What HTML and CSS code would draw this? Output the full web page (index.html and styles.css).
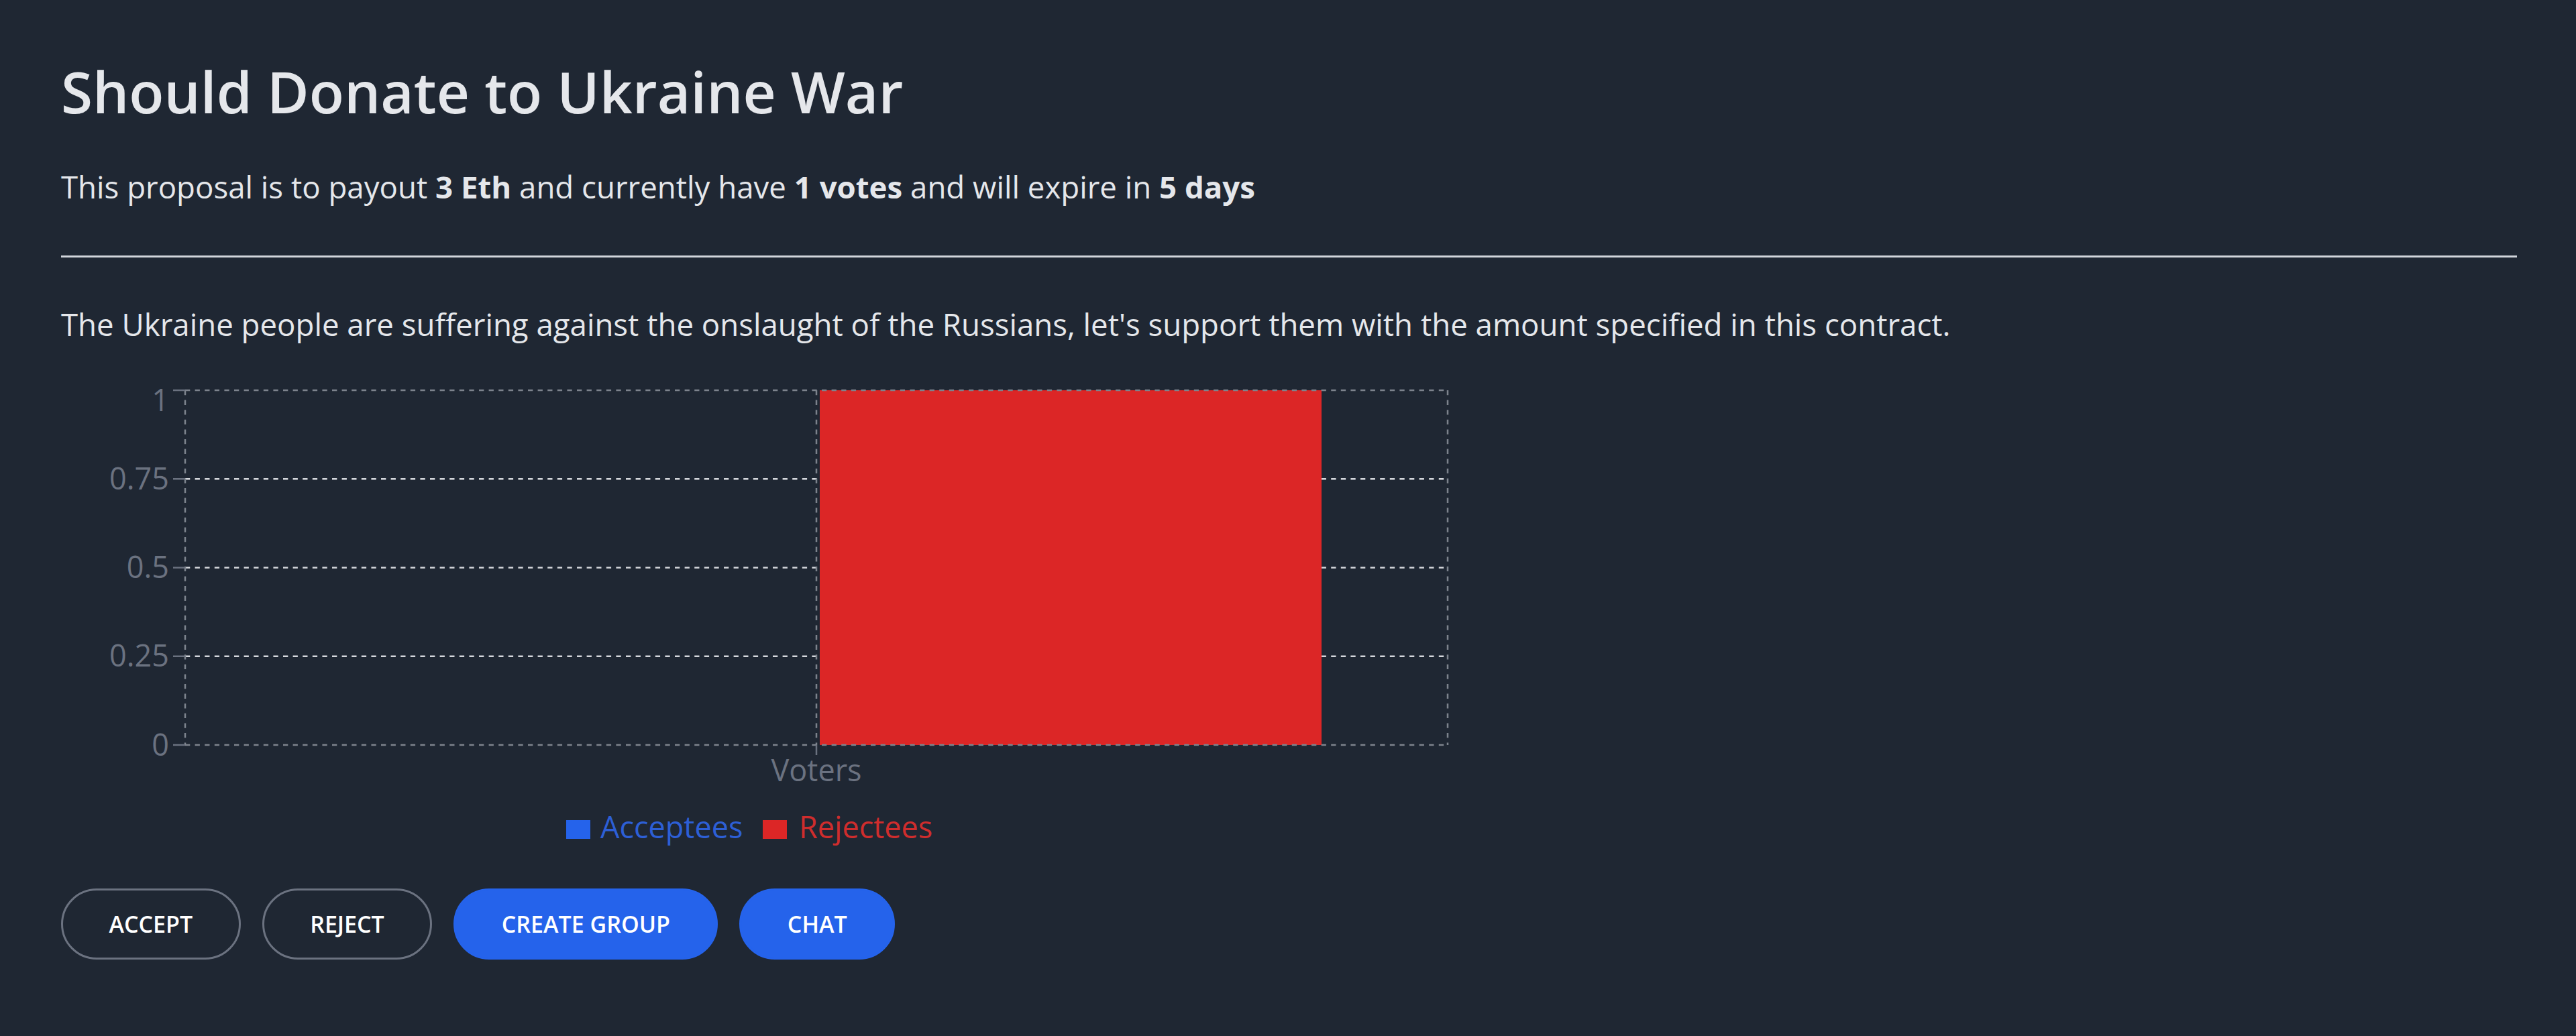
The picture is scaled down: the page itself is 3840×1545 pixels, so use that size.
FILE: index.html
```html
<!DOCTYPE html>
<html lang="en">
<head>
    <meta charset="UTF-8" />
    <meta name="viewport" content="width=device-width, initial-scale=1.0" />
    <title>Proposal</title>
    <link rel="stylesheet" href="styles.css">
</head>
<body>
    <main class="proposal">
        <h1 class="proposal-title">Should Donate to Ukraine War</h1>
        <p class="proposal-meta">This proposal is to payout <strong>3 Eth</strong> and currently have <strong>1 votes</strong> and will expire in <strong>5 days</strong></p>

        <hr class="divider" />

        <p class="proposal-desc">The Ukraine people are suffering against the onslaught of the Russians, let's support them with the amount specified in this contract.</p>

        <!-- Votes chart -->
        <svg class="chart" width="2120" height="740" viewBox="0 0 2120 740">
            <g class="grid">
                <line class="grid-inner" x1="185" y1="174.25" x2="2067" y2="174.25" />
                <line class="grid-inner" x1="185" y1="306.5" x2="2067" y2="306.5" />
                <line class="grid-inner" x1="185" y1="438.75" x2="2067" y2="438.75" />
            </g>

            <rect class="bar-reject" x="1131" y="42" width="748" height="529" />

            <g class="grid">
                <line class="grid-edge" x1="185" y1="42" x2="2067" y2="42" />
                <line class="grid-edge" x1="2067" y1="42" x2="2067" y2="571" />
                <line class="grid-edge" x1="1126" y1="42" x2="1126" y2="571" />
                <line class="grid-edge" x1="185" y1="42" x2="185" y2="571" />
                <line class="grid-edge" x1="185" y1="571" x2="2067" y2="571" />
            </g>

            <g class="ticks">
                <line x1="167" y1="42" x2="185" y2="42" />
                <line x1="167" y1="174.25" x2="185" y2="174.25" />
                <line x1="167" y1="306.5" x2="185" y2="306.5" />
                <line x1="167" y1="438.75" x2="185" y2="438.75" />
                <line x1="167" y1="571" x2="185" y2="571" />
                <line x1="1126" y1="571" x2="1126" y2="586" />
            </g>

            <g class="tick-labels">
                <text x="161" y="73">1</text>
                <text x="161" y="190">0.75</text>
                <text x="161" y="322">0.5</text>
                <text x="161" y="454">0.25</text>
                <text x="161" y="587">0</text>
                <text class="axis-name" x="1126" y="625">Voters</text>
            </g>

            <g class="legend">
                <rect class="swatch-accept" x="753" y="683" width="36" height="28" />
                <text class="legend-accept" x="804" y="710">Acceptees</text>
                <rect class="swatch-reject" x="1046" y="683" width="36" height="28" />
                <text class="legend-reject" x="1100" y="710">Rejectees</text>
            </g>
        </svg>

        <div class="actions">
            <button class="btn btn-outline">Accept</button>
            <button class="btn btn-outline">Reject</button>
            <button class="btn btn-primary">Create Group</button>
            <button class="btn btn-primary">Chat</button>
        </div>
    </main>
</body>
</html>
```

FILE: styles.css
```css
body {
    margin: 0;
    padding: 0;
    background-color: #1f2733;
    color: #e5e7eb;
    font-family: 'Open Sans', 'Noto Sans', sans-serif;
    min-height: 100vh;
}

.proposal {
    padding: 88px 88px 0 91px;
    display: flex;
    flex-direction: column;
}

.proposal-title {
    margin: 0;
    font-size: 85.5px;
    line-height: 96px;
    font-weight: 600;
    color: #e5e7eb;
}

.proposal-meta {
    margin: 66px 0 0;
    font-size: 45.6px;
    line-height: 56px;
}

.proposal-meta strong {
    font-weight: 700;
}

.divider {
    margin: 75px 0 0;
    border: none;
    height: 3px;
    background-color: #d1d5db;
}

.proposal-desc {
    margin: 71px 0 0;
    font-size: 45.6px;
    line-height: 56px;
}

.chart {
    display: block;
    margin-top: 29px;
    font-family: 'Open Sans', 'Noto Sans', sans-serif;
}

.grid line {
    stroke-width: 2.5;
    stroke-dasharray: 7.3 7.3;
}

.grid-inner {
    stroke: #d5d8dd;
}

.grid-edge {
    stroke: #7d838d;
}

.ticks line {
    stroke: #6b7280;
    stroke-width: 2.5;
}

.tick-labels text {
    fill: #6b7280;
    font-size: 45px;
    text-anchor: end;
}

.tick-labels .axis-name {
    text-anchor: middle;
}

.bar-reject {
    fill: #dc2626;
}

.legend text {
    font-size: 45px;
}

.swatch-accept {
    fill: #2563eb;
}

.legend-accept {
    fill: #2d5fd6;
}

.swatch-reject {
    fill: #dc2626;
}

.legend-reject {
    fill: #cf2d2d;
}

.actions {
    display: flex;
    gap: 32px;
    margin-top: 45px;
}

.btn {
    height: 106px;
    padding: 0 68.5px;
    border-radius: 53px;
    border: 3px solid #6b7280;
    font-family: 'Open Sans', 'Noto Sans', sans-serif;
    font-size: 34px;
    font-weight: 600;
    text-transform: uppercase;
    color: #ffffff;
    background-color: transparent;
    cursor: pointer;
}

.btn-primary {
    background-color: #2563eb;
    border-color: #2563eb;
}
```
